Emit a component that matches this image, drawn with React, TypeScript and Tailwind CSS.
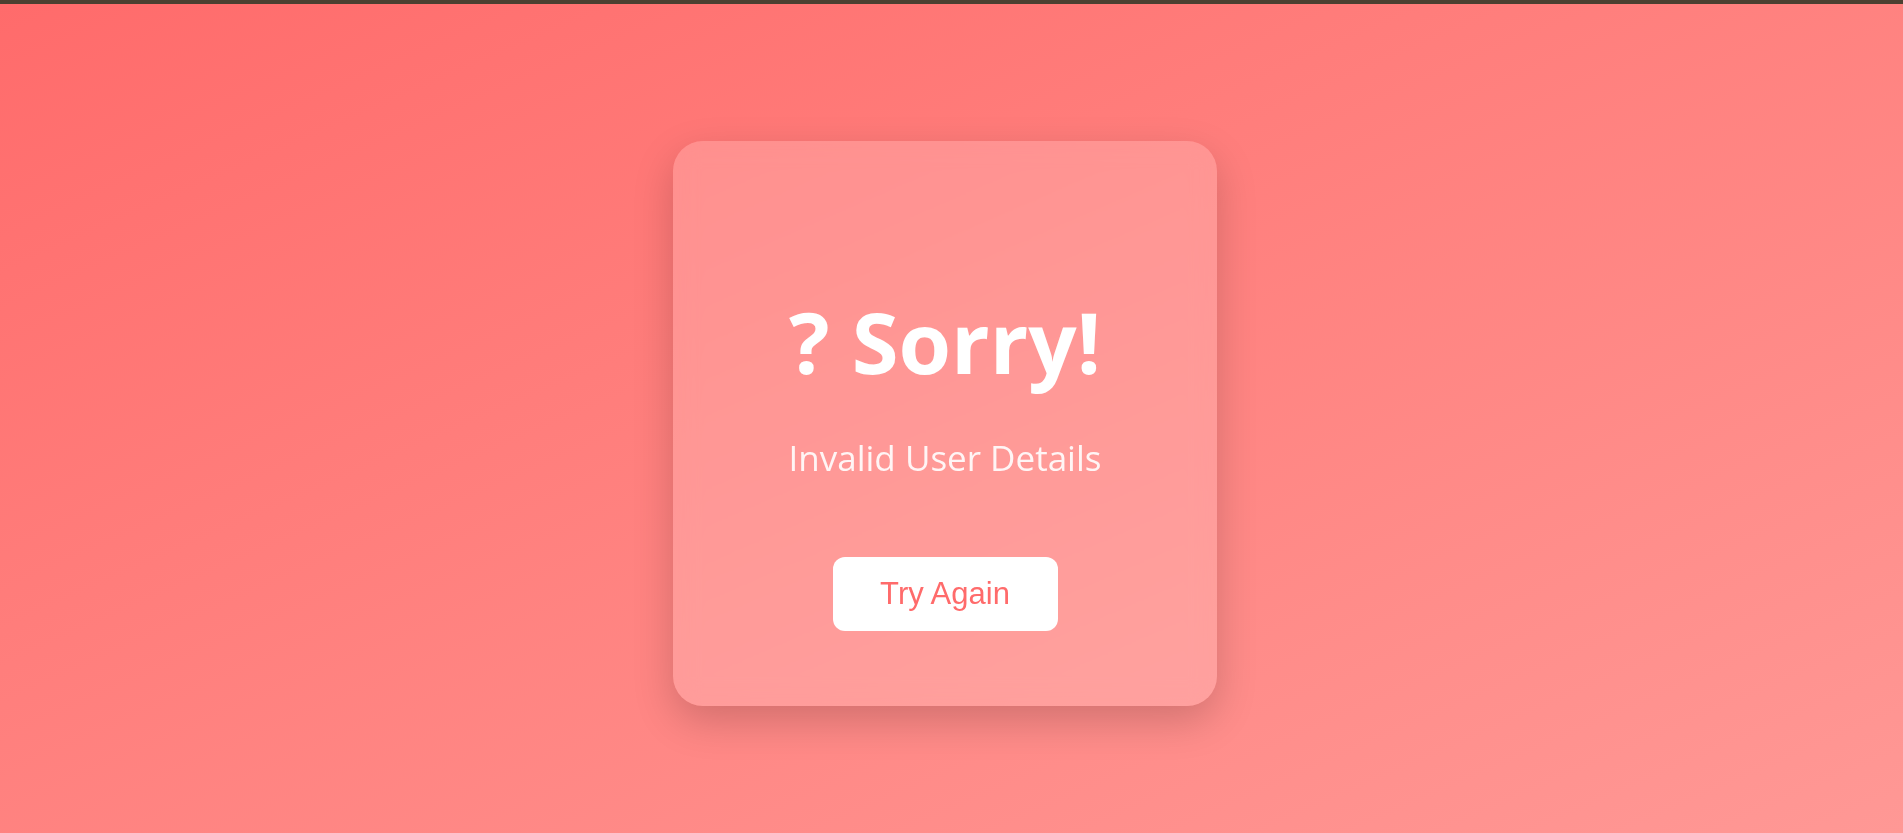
export default function App() {
  return (
    <div className="flex h-screen flex-col overflow-hidden">
      <div className="h-[4px] shrink-0 bg-[#4b4031]" />
      <div className="flex flex-1 justify-center bg-gradient-to-br from-[#ff6b6b] to-[#ff9895] pt-[137px] pr-[13px]">
        {/* Error card */}
        <div className="flex h-[565px] w-[544px] flex-col items-center rounded-[30px] bg-white/[0.18] pt-[158px] shadow-[0_15px_40px_rgba(0,0,0,0.18)] backdrop-blur-md">
          <h1 className="font-['Open_Sans',sans-serif] text-[85px] leading-none font-bold text-white">
            ? Sorry!
          </h1>
          <p className="mt-[56px] font-['Open_Sans',sans-serif] text-[35px] leading-none text-white/90">
            Invalid User Details
          </p>
          <button className="mt-[82px] flex h-[74px] w-[225px] items-center justify-center rounded-xl bg-white font-['Liberation_Sans',Arial,sans-serif] text-[31px] text-[#ff6b6b]">
            Try Again
          </button>
        </div>
      </div>
    </div>
  )
}
